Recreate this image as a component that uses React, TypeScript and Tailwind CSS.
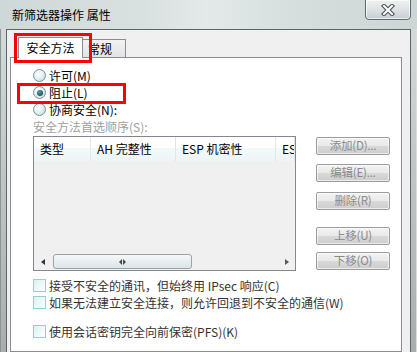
import React from 'react';

const Radio = ({ checked }: { checked?: boolean }) => (
  <span className="flex h-[13px] w-[13px] shrink-0 items-center justify-center rounded-full border border-[#7d8e96] bg-[radial-gradient(circle_at_40%_35%,#ffffff_0%,#e4f1f2_45%,#b5d6da_100%)]">
    {checked && (
      <span className="h-[6px] w-[6px] rounded-full bg-[radial-gradient(circle_at_40%_35%,#5fa3aa_0%,#1e5d66_60%,#123c44_100%)]" />
    )}
  </span>
);

const Check = () => (
  <span className="h-[13px] w-[13px] shrink-0 border border-[#8fd2d6] bg-[linear-gradient(135deg,#dcf0f1,#ffffff)]" />
);

const Btn = ({ label, className = '' }: { label: string; className?: string }) => (
  <div
    className={`flex h-[18px] w-[74px] items-center justify-center whitespace-nowrap rounded-[2px] border border-[#9a9c9d] bg-[linear-gradient(180deg,#f3f3f3_0%,#e9e9e9_48%,#d9d9d9_52%,#cdcdcd_100%)] text-[11.5px] leading-none tracking-[-0.2px] text-[#8a8a8a] shadow-[inset_0_0_0_1px_rgba(255,255,255,0.6)] ${className}`}
  >
    {label}
  </div>
);

export default function App() {
  const cols = [
    { label: '类型', w: 'w-[57px]' },
    { label: 'AH 完整性', w: 'w-[85px]' },
    { label: 'ESP 机密性', w: 'w-[100px]' },
    { label: 'ESP 完整性', w: 'flex-1' },
  ];

  return (
    <div className="relative h-[352px] w-[417px] overflow-hidden bg-[linear-gradient(90deg,#cfd8d8_0%,#d9e1e0_35%,#e3e9e8_50%,#d6dede_70%,#cdd5d5_100%)] font-['Noto_Sans_CJK_SC',sans-serif]">
      {/* title bar */}
      <div className="flex h-[29px] items-center pl-[12px] text-[12px] leading-none text-black">新筛选器操作 属性</div>
      <div className="absolute right-[6px] top-[-1px] flex h-[21px] w-[46px] items-center justify-center rounded-b-[4px] border border-[#5f686d] bg-[linear-gradient(180deg,#eef1f2_0%,#dde3e5_50%,#c6cdd0_100%)] shadow-[inset_0_0_0_1px_rgba(255,255,255,0.7)]">
        <svg width="14" height="12" viewBox="0 0 14 12">
          <path d="M3 2 L11 10 M11 2 L3 10" stroke="#4a5358" strokeWidth="4.2" strokeLinecap="square" />
          <path d="M3 2 L11 10 M11 2 L3 10" stroke="#ffffff" strokeWidth="2" strokeLinecap="square" />
        </svg>
      </div>

      <div className="flex h-[323px]">
        <div className="w-[6px] border-l border-[#8c9494] bg-[linear-gradient(180deg,#d2dada,#a9adad)]" />
        {/* client area */}
        <div className="flex flex-1 flex-col border-x border-t border-[#5d6566] bg-[#f0f0f0] pl-[3px] pr-[8px] pt-[7px]">
          {/* tabs */}
          <div className="flex h-[20px] items-end pl-[8px] text-[12px] leading-none text-black">
            <div className="relative z-10 mb-[-1px] flex h-[21px] w-[65px] items-center justify-center border-x border-t border-[#898c95] bg-white pb-[1px]">
              安全方法
            </div>
            <div className="flex h-[18px] w-[43px] items-center border-r border-t border-[#898c95] bg-[linear-gradient(180deg,#f2f2f2,#e3e3e3)] pl-[5px]">
              常规
            </div>
          </div>

          {/* tab panel */}
          <div className="flex-1 border border-[#898c95] bg-white pl-[22px] pt-[9px] text-[12px] leading-none">
            <div className="flex h-[17px] items-center gap-[3px] text-black">
              <Radio />
              <span>许可(M)</span>
            </div>
            <div className="flex h-[17px] items-center gap-[3px] text-black">
              <Radio checked />
              <span>阻止(L)</span>
            </div>
            <div className="flex h-[17px] items-center gap-[3px] text-black">
              <Radio />
              <span>协商安全(N):</span>
            </div>
            <div className="flex h-[17px] items-center text-[#a0a0a0]">安全方法首选顺序(S):</div>

            <div className="mt-[1px] flex">
              {/* list view */}
              <div className="flex h-[135px] w-[263px] flex-col border border-[#828790]">
                <div className="flex h-[24px] bg-[linear-gradient(180deg,#ffffff_0%,#ffffff_45%,#f2f9fa_46%,#edf5f7_100%)] text-black">
                  {cols.map((c) => (
                    <div
                      key={c.label}
                      className={`${c.w} flex items-center overflow-hidden whitespace-nowrap border-r border-[#e1e6e9] pl-[6px]`}
                    >
                      {c.label}
                    </div>
                  ))}
                </div>
                <div className="flex-1 bg-[#f0f0f0]" />
                <div className="flex h-[17px] items-center bg-[#f0f0f0]">
                  <div className="flex h-full w-[17px] items-center justify-center">
                    <span className="h-0 w-0 border-y-[3.5px] border-r-[4px] border-y-transparent border-r-[#333333]" />
                  </div>
                  <div className="ml-[2px] flex h-[15px] w-[139px] items-center justify-center gap-[1px] rounded-[3px] border border-[#97a3a8] bg-[linear-gradient(180deg,#f5f8f9_0%,#e8eef0_50%,#dbe4e7_100%)]">
                    <span className="h-0 w-0 border-y-[3.5px] border-r-[3px] border-y-transparent border-r-[#4a4a4a]" />
                    <span className="h-0 w-0 border-y-[3.5px] border-l-[3px] border-y-transparent border-l-[#4a4a4a]" />
                  </div>
                  <div className="flex-1" />
                  <div className="flex h-full w-[17px] items-center justify-center">
                    <span className="h-0 w-0 border-y-[3.5px] border-l-[4px] border-y-transparent border-l-[#5a5a5a]" />
                  </div>
                </div>
              </div>

              {/* buttons */}
              <div className="ml-[20px] flex flex-col">
                <Btn label="添加(D)..." className="mt-[1px]" />
                <Btn label="编辑(E)..." className="mt-[9px]" />
                <Btn label="删除(R)" className="mt-[10px]" />
                <Btn label="上移(U)" className="mt-[17px]" />
                <Btn label="下移(O)" className="mt-[7px]" />
              </div>
            </div>

            <div className="mt-[6px] flex h-[17px] items-center gap-[3px] text-[#333333]">
              <Check />
              <span>接受不安全的通讯，但始终用 IPsec 响应(C)</span>
            </div>
            <div className="flex h-[17px] items-center gap-[3px] text-[#333333]">
              <Check />
              <span>如果无法建立安全连接，则允许回退到不安全的通信(W)</span>
            </div>
            <div className="mt-[12px] flex h-[17px] items-center gap-[3px] text-[#333333]">
              <Check />
              <span>使用会话密钥完全向前保密(PFS)(K)</span>
            </div>
          </div>
        </div>
        <div className="w-[6px] border-r border-[#dcdcdc] bg-[linear-gradient(180deg,#d2dada,#a9adad)]" />
      </div>

      {/* annotation boxes */}
      <div className="absolute left-[14px] top-[33px] z-20 h-[30px] w-[78px] border-[3px] border-[#ff0000]" />
      <div className="absolute left-[17px] top-[83px] z-20 h-[21px] w-[109px] border-[3px] border-[#ff0000]" />
    </div>
  );
}
